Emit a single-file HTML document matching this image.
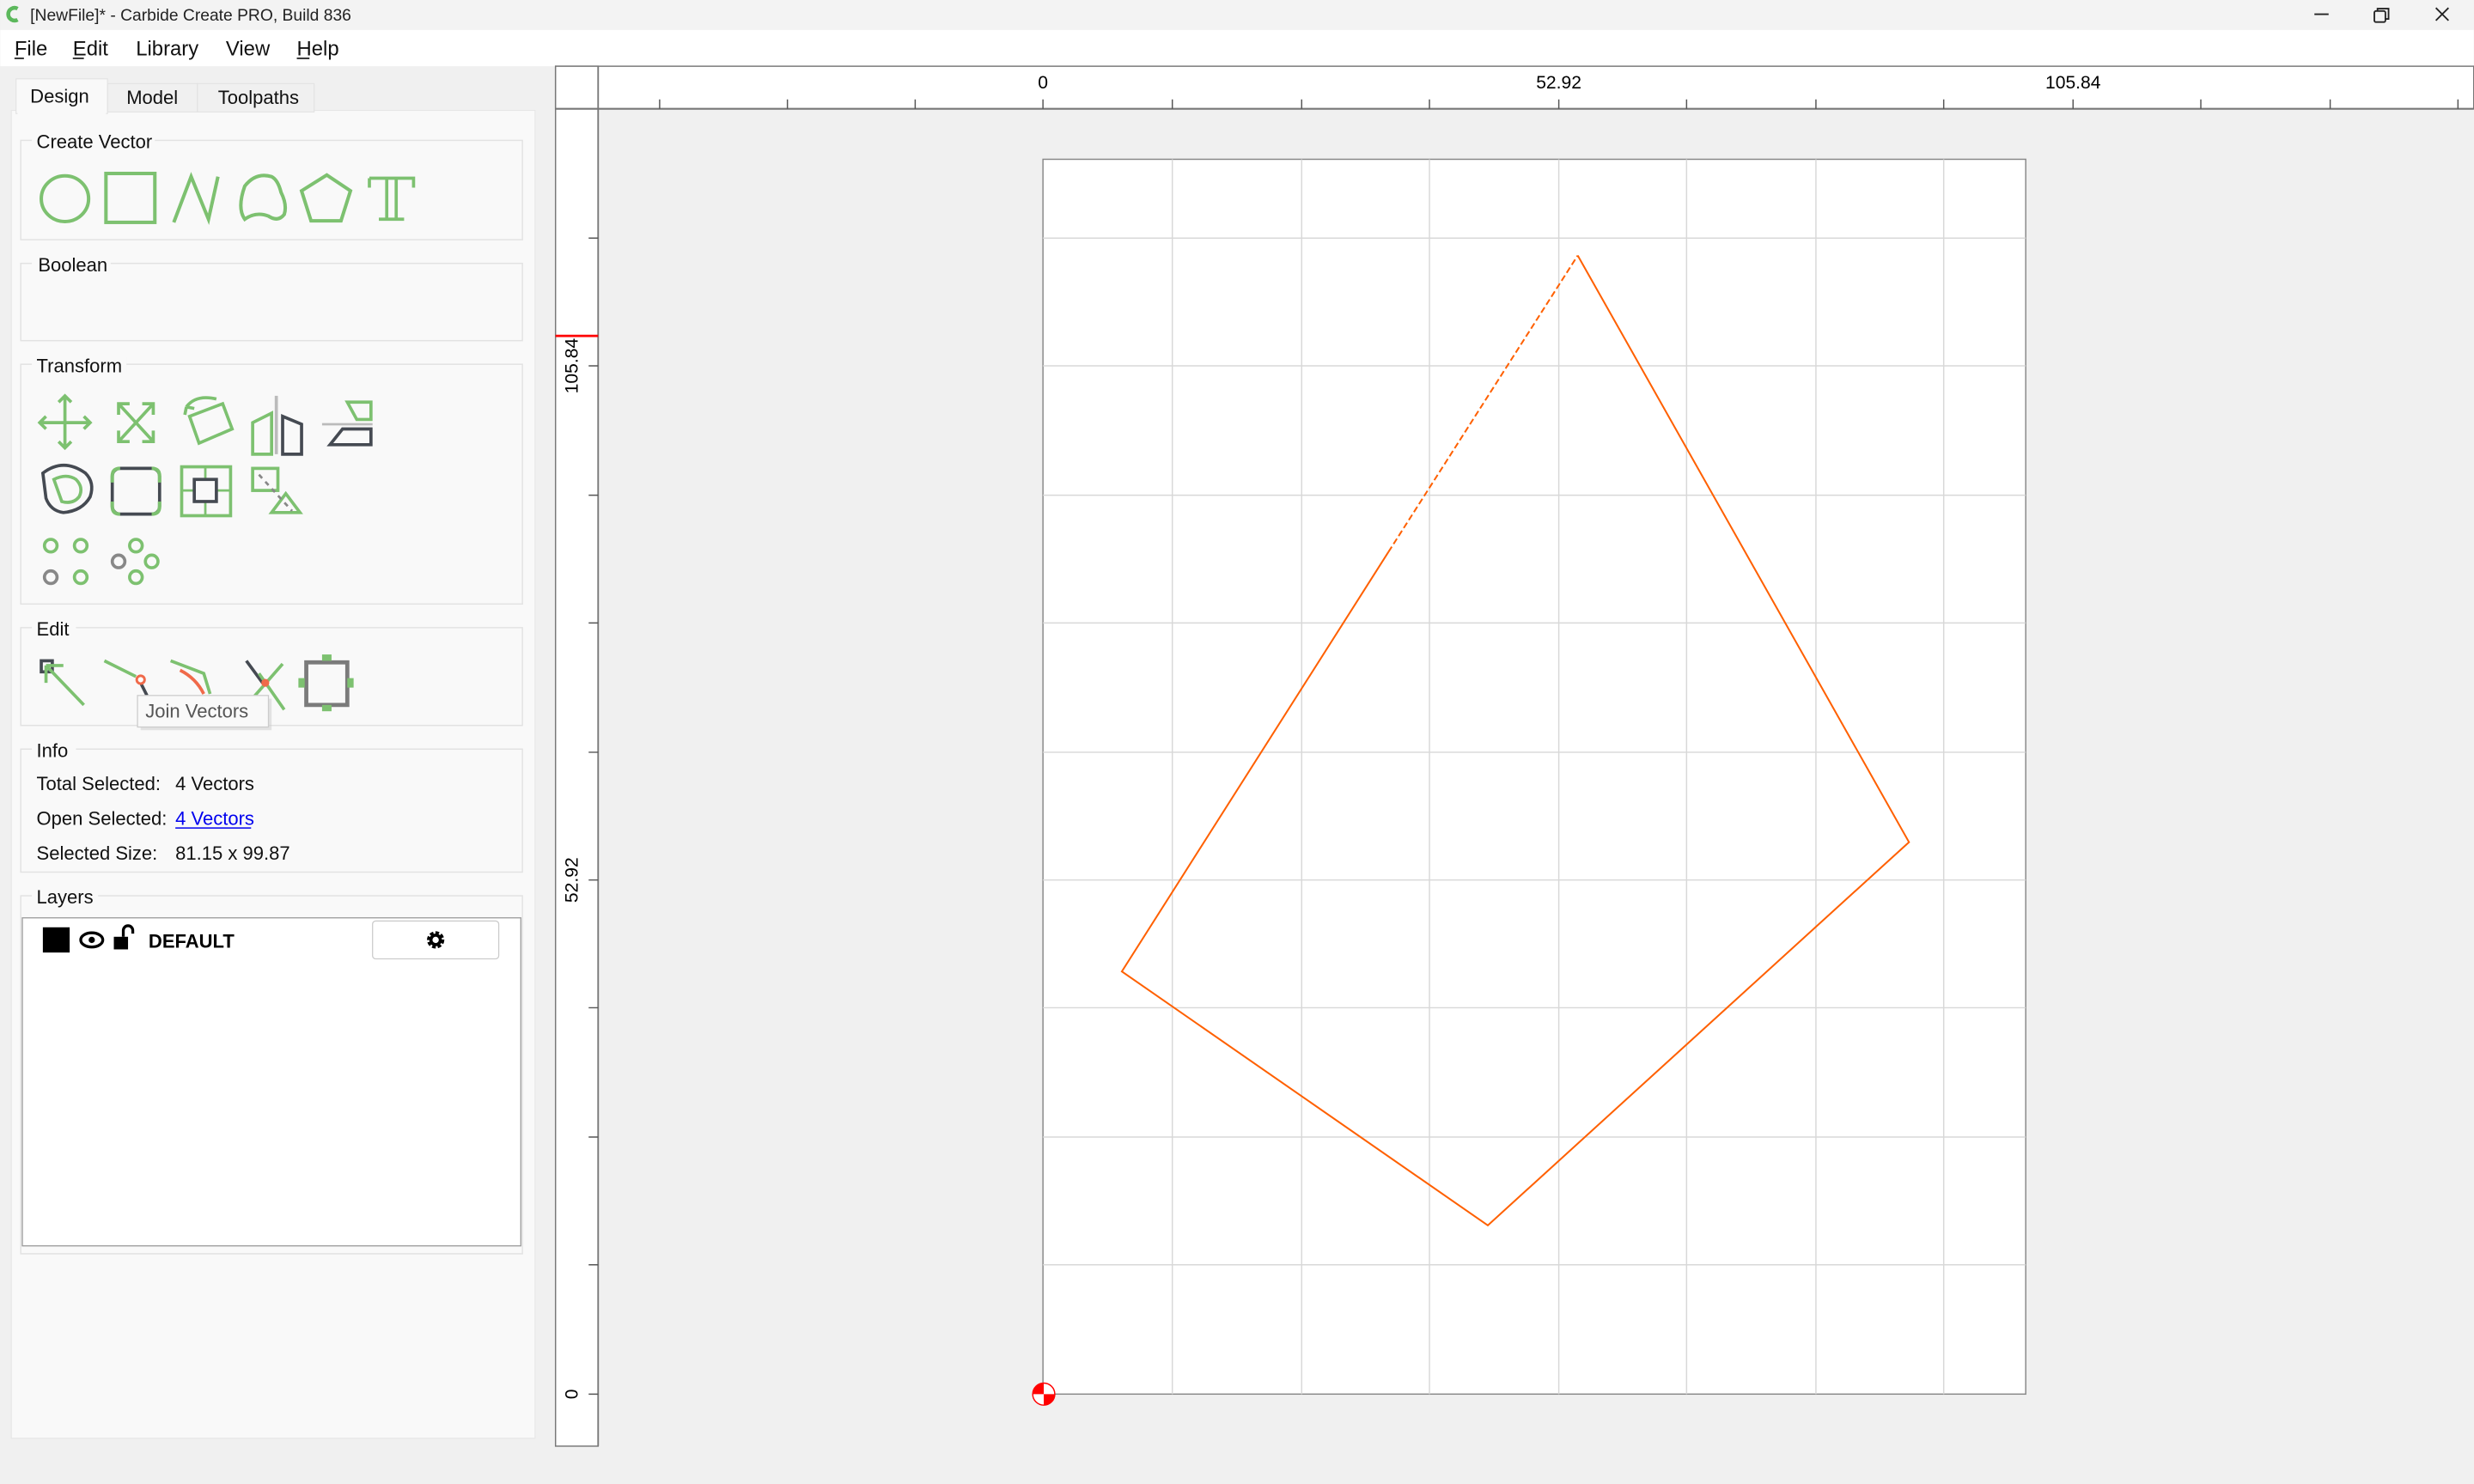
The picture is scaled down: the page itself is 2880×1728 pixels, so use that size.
<!DOCTYPE html>
<html><head><meta charset="utf-8">
<style>
html,body{margin:0;padding:0;width:2880px;height:1728px;overflow:hidden;background:#f0f0f0;}
svg{display:block;}
text{font-family:"Liberation Sans",sans-serif;}
</style></head>
<body>
<svg width="2880" height="1728" viewBox="0 0 1568 941" xmlns="http://www.w3.org/2000/svg">
<rect width="1568" height="941" fill="#f0f0f0"/>
<rect x="0" y="0" width="1568" height="19" fill="#f3f3f3"/>
<path d="M11 5.5 A4 4 0 1 0 11 12.5" fill="none" stroke="#5cb85c" stroke-width="2.5"/>
<text x="19" y="13" font-size="10.5" fill="#222">[NewFile]* - Carbide Create PRO, Build 836</text>
<line x1="1467" y1="9" x2="1476" y2="9" stroke="#222" stroke-width="1"/>
<rect x="1505" y="7" width="7" height="7" fill="none" stroke="#222" stroke-width="1" rx="1"/>
<path d="M1507 7 V5.5 H1514 V12 H1512" fill="none" stroke="#222" stroke-width="1"/>
<path d="M1544 5 L1552 13 M1552 5 L1544 13" stroke="#222" stroke-width="1"/>
<rect x="0" y="19" width="1568" height="23" fill="#fff"/>
<g font-size="13" fill="#111">
<text x="9" y="35">File</text><text x="46" y="35">Edit</text><text x="86" y="35">Library</text><text x="143" y="35">View</text><text x="188" y="35">Help</text>
</g>
<g stroke="#111" stroke-width="0.9">
<line x1="9" y1="37" x2="15" y2="37"/><line x1="46" y1="37" x2="53" y2="37"/><line x1="188" y1="37" x2="196" y2="37"/>
</g>
<rect x="7" y="70" width="332" height="842" fill="#f9f9f9" stroke="#e6e6e6" stroke-width="0.6"/>
<rect x="68" y="53" width="57" height="18" fill="#f0f0f0" stroke="#e2e2e2" stroke-width="0.6"/>
<rect x="125" y="53" width="74" height="18" fill="#f0f0f0" stroke="#e2e2e2" stroke-width="0.6"/>
<rect x="10" y="50" width="58" height="22" fill="#f9f9f9" stroke="#e2e2e2" stroke-width="0.6"/>
<rect x="11" y="69" width="56" height="4" fill="#f9f9f9"/>
<g font-size="12" fill="#111">
<text x="19" y="65">Design</text><text x="80" y="66">Model</text><text x="138" y="66">Toolpaths</text>
</g>
<g fill="none" stroke="#e2e2e2" stroke-width="0.8">
<rect x="13" y="89" width="318" height="63"/>
<rect x="13" y="167" width="318" height="49"/>
<rect x="13" y="231" width="318" height="152"/>
<rect x="13" y="398" width="318" height="62"/>
<rect x="13" y="475" width="318" height="78"/>
<rect x="13" y="568" width="318" height="227"/>
</g>
<g fill="#f9f9f9">
<rect x="20" y="84" width="78" height="10"/><rect x="20" y="162" width="50" height="10"/>
<rect x="20" y="226" width="60" height="10"/><rect x="20" y="393" width="28" height="10"/>
<rect x="20" y="470" width="28" height="10"/><rect x="20" y="563" width="42" height="10"/>
</g>
<g font-size="12" fill="#111">
<text x="23" y="94">Create Vector</text><text x="24" y="172">Boolean</text><text x="23" y="236">Transform</text>
<text x="23" y="403">Edit</text><text x="23" y="480">Info</text><text x="23" y="573">Layers</text>
</g>
<g fill="none" stroke="#7dc170" stroke-width="2.2">
<ellipse cx="41" cy="126" rx="15" ry="14.5"/>
<rect x="67" y="110" width="31" height="31"/>
<path d="M110 141 L121 112 L132 139 L138 112"/>
<path d="M155 139 Q150 132 155 118 Q162 109 172 112 Q176 114 178 122 Q182 130 180 136 Q176 141 170 137 Q162 134 155 139 Z"/>
<path d="M207 111 L222 121 L216 140 L197 140 L191 121 Z"/>
<path d="M234 113 H262 V119 M234 113 V119 M245 113 V139 M251 113 V139 M240 139 H256" stroke-width="2"/>
</g>
<g fill="none" stroke="#7dc170" stroke-width="2">
<path d="M25 268 H57 M41 251 V284 M29 264 L25 268 L29 272 M53 264 L57 268 L53 272 M37 255 L41 251 L45 255 M37 280 L41 284 L45 280"/>
<path d="M75 256 L97 280 M97 256 L75 280 M75 263 V256 H82 M90 256 H97 V263 M75 273 V280 H82 M90 280 H97 V273"/>
<path d="M120 264 L141 256 L147 272 L126 281 Z"/>
<path d="M118 258 Q124 250 137 253 M118 258 L117 263 M118 258 L123 259"/>
<path d="M160 288 V268 L172 262 V288 Z"/>
<path d="M220 255 H235 V266 H226 Z"/>
</g>
<line x1="175" y1="251" x2="175" y2="288" stroke="#bbb" stroke-width="2"/>
<path d="M179 288 V264 L191 269 V288 Z" fill="none" stroke="#454a52" stroke-width="2"/>
<line x1="204" y1="269" x2="236" y2="269" stroke="#bbb" stroke-width="1.5"/>
<path d="M209 282 L217 272 H235 V282 Z" fill="none" stroke="#454a52" stroke-width="2"/>
<path d="M27 300 Q40 290 54 300 Q60 306 57 315 Q52 324 40 325 Q32 324 29 316 Z" fill="none" stroke="#454a52" stroke-width="2"/>
<path d="M34 304 Q42 300 48 304 Q53 309 50 315 Q46 320 39 318 Z" fill="none" stroke="#7dc170" stroke-width="2"/>
<rect x="71" y="297" width="30" height="29" rx="5" fill="none" stroke="#454a52" stroke-width="2"/>
<path d="M71 306 V302 Q71 297 76 297 M96 297 Q101 297 101 302 V306 M101 318 V321 Q101 326 96 326 M76 326 Q71 326 71 321 V318" fill="none" stroke="#7dc170" stroke-width="2.2"/>
<rect x="115" y="296" width="31" height="31" fill="none" stroke="#7dc170" stroke-width="2"/>
<path d="M130 296 V327 M115 311 H146" stroke="#7dc170" stroke-width="1.5"/>
<rect x="123" y="304" width="14" height="14" fill="#f9f9f9" stroke="#454a52" stroke-width="2"/>
<rect x="160" y="297" width="16" height="14" fill="none" stroke="#7dc170" stroke-width="2"/>
<path d="M172 325 L181 313 L190 325 Z" fill="none" stroke="#7dc170" stroke-width="2"/>
<path d="M164 301 L185 324" stroke="#888" stroke-width="1.5" stroke-dasharray="3,3"/>
<g fill="none" stroke-width="2">
<circle cx="32" cy="346" r="4" stroke="#7dc170"/><circle cx="51" cy="346" r="4" stroke="#7dc170"/>
<circle cx="32" cy="366" r="4" stroke="#888"/><circle cx="51" cy="366" r="4" stroke="#7dc170"/>
<circle cx="86" cy="346" r="4" stroke="#7dc170"/><circle cx="75" cy="356" r="4" stroke="#888"/>
<circle cx="96" cy="356" r="4" stroke="#7dc170"/><circle cx="86" cy="366" r="4" stroke="#7dc170"/>
</g>
<rect x="26" y="419" width="7" height="7" fill="none" stroke="#454a52" stroke-width="2"/>
<path d="M29 422 L53 447 M29 422 H40 M29 422 V433" fill="none" stroke="#7dc170" stroke-width="2"/>
<path d="M66 419 L86 429" stroke="#7dc170" stroke-width="2"/>
<path d="M89 433 L93 441" stroke="#454a52" stroke-width="2"/>
<circle cx="89" cy="431" r="2.5" fill="#fff" stroke="#f06a4a" stroke-width="1.6"/>
<path d="M108 419 L129 427 L133 440" fill="none" stroke="#7dc170" stroke-width="2"/>
<path d="M114 425 Q124 430 129 440" fill="none" stroke="#f06a4a" stroke-width="2"/>
<path d="M156 419 L167 434" stroke="#454a52" stroke-width="2"/>
<path d="M179 421 L158 445 M164 427 L180 450" stroke="#7dc170" stroke-width="2"/>
<circle cx="168" cy="433" r="2.5" fill="#f06a4a"/>
<rect x="194" y="420" width="26" height="27" fill="none" stroke="#7b7b7b" stroke-width="2.6"/>
<g fill="#7dc170"><rect x="204" y="415" width="6" height="4"/><rect x="204" y="447" width="6" height="4"/><rect x="189" y="430" width="4" height="6"/><rect x="220" y="430" width="4" height="6"/></g>
<rect x="89" y="443" width="83" height="20" fill="#ccc" opacity="0.5"/>
<rect x="87" y="441" width="83" height="20" fill="#f9f9f9" stroke="#ccc" stroke-width="0.7"/>
<text x="92" y="455" font-size="12" fill="#555">Join Vectors</text>
<g font-size="12" fill="#111">
<text x="23" y="501">Total Selected:</text><text x="111" y="501">4 Vectors</text>
<text x="23" y="523">Open Selected:</text>
<text x="23" y="545">Selected Size:</text><text x="111" y="545">81.15 x 99.87</text>
</g>
<text x="111" y="523" font-size="12" fill="#0000ee">4 Vectors</text>
<line x1="111" y1="525" x2="159" y2="525" stroke="#0000ee" stroke-width="0.8"/>
<rect x="14" y="582" width="316" height="208" fill="#fff" stroke="#999" stroke-width="0.7"/>
<rect x="27" y="588" width="17" height="16" fill="#000"/>
<ellipse cx="58" cy="596" rx="7" ry="4.5" fill="#fff" stroke="#000" stroke-width="1.8"/>
<circle cx="58" cy="596" r="2" fill="#000"/>
<rect x="72" y="594" width="9" height="8" fill="#000"/>
<path d="M78 594 V590 A3 3 0 0 1 84 590 V592" fill="none" stroke="#000" stroke-width="1.8"/>
<text x="94" y="601" font-size="12" font-weight="bold" fill="#000">DEFAULT</text>
<rect x="236" y="584" width="80" height="24" rx="2" fill="#fff" stroke="#ccc" stroke-width="0.7"/>
<circle cx="276" cy="596" r="4" fill="none" stroke="#000" stroke-width="3" stroke-dasharray="2,1.1"/>
<circle cx="276" cy="596" r="3" fill="none" stroke="#000" stroke-width="2"/>
<rect x="352" y="42" width="1216" height="27" fill="#fff" stroke="#777" stroke-width="0.8"/>
<rect x="352" y="42" width="27" height="875" fill="#fff" stroke="#777" stroke-width="0.8"/>
<line x1="352" y1="69" x2="1568" y2="69" stroke="#777" stroke-width="1.2"/>
<line x1="379" y1="42" x2="379" y2="917" stroke="#777" stroke-width="1"/>
<g stroke="#555" stroke-width="0.8">
<path d="M418 63V69M499 63V69M580 63V69M661 63V69M743 63V69M825 63V69M906 63V69M988 63V69M1069 63V69M1151 63V69M1232 63V69M1314 63V69M1395 63V69M1477 63V69M1558 63V69"/>
<path d="M373 151H379M373 232H379M373 314H379M373 395H379M373 477H379M373 558H379M373 639H379M373 721H379M373 802H379M373 884H379"/>
</g>
<g font-size="11.5" fill="#000" text-anchor="middle">
<text x="661" y="56">0</text><text x="988" y="56">52.92</text><text x="1314" y="56">105.84</text>
<text transform="translate(366 232) rotate(-90)">105.84</text>
<text transform="translate(366 558) rotate(-90)">52.92</text>
<text transform="translate(366 884) rotate(-90)">0</text>
</g>
<line x1="352" y1="213" x2="379" y2="213" stroke="#f00" stroke-width="1.5"/>
<rect x="661" y="101" width="623" height="783" fill="#fff" stroke="#888" stroke-width="0.8"/>
<g stroke="#d8d8d8" stroke-width="0.8">
<path d="M743 101V884M825 101V884M906 101V884M988 101V884M1069 101V884M1151 101V884M1232 101V884"/>
<path d="M661 151H1284M661 232H1284M661 314H1284M661 395H1284M661 477H1284M661 558H1284M661 639H1284M661 721H1284M661 802H1284"/>
</g>
<g fill="none" stroke="#ff6000" stroke-width="1.1">
<path d="M1000 162 L1210 534 L943 777 L711 616 L880 350"/>
<path d="M880 350 L1000 162" stroke-dasharray="4,2"/>
</g>
<circle cx="661.5" cy="884" r="7" fill="#fff" stroke="#f00" stroke-width="0.8"/>
<path d="M661.5 884 V877 A7 7 0 0 0 654.5 884 Z M661.5 884 V891 A7 7 0 0 0 668.5 884 Z" fill="#f00"/>
</svg>
</body></html>
